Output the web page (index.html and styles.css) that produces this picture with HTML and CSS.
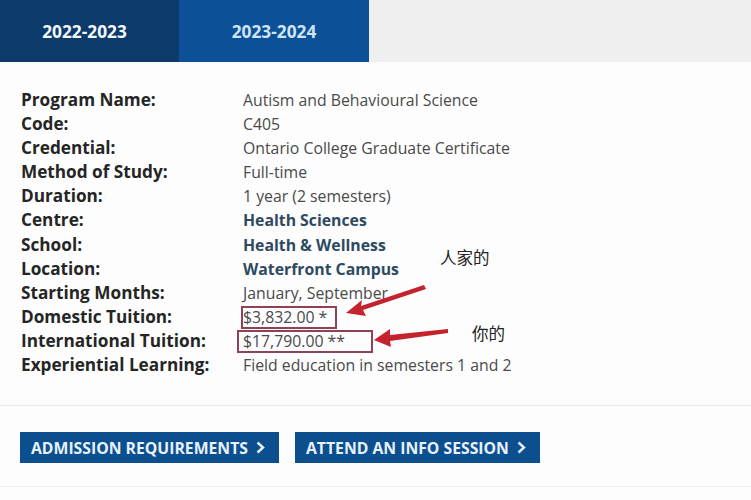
FILE: index.html
```html
<!DOCTYPE html>
<html>
<head>
<meta charset="utf-8">
<link rel="stylesheet" href="styles.css">
</head>
<body>
<div class="tabbar">
  <div class="tab tab-old">2022-2023</div>
  <div class="tab tab-active">2023-2024</div>
  <div class="tab-rest"></div>
</div>
<div class="info">
  <div class="grid">
    <div class="lbl">Program Name:</div><div class="val">Autism and Behavioural Science</div>
    <div class="lbl">Code:</div><div class="val">C405</div>
    <div class="lbl">Credential:</div><div class="val">Ontario College Graduate Certificate</div>
    <div class="lbl">Method of Study:</div><div class="val">Full-time</div>
    <div class="lbl">Duration:</div><div class="val">1 year (2 semesters)</div>
    <div class="lbl">Centre:</div><div class="val strong">Health Sciences</div>
    <div class="lbl">School:</div><div class="val strong">Health &amp; Wellness</div>
    <div class="lbl">Location:</div><div class="val strong">Waterfront Campus</div>
    <div class="lbl">Starting Months:</div><div class="val">January, September</div>
    <div class="lbl">Domestic Tuition:</div><div class="val"><span class="box box1">$3,832.00 *</span></div>
    <div class="lbl">International Tuition:</div><div class="val"><span class="box box2">$17,790.00 **</span></div>
    <div class="lbl">Experiential Learning:</div><div class="val">Field education in semesters 1 and 2</div>
  </div>
  <div class="note note1">人家的</div>
  <div class="note note2">你的</div>
  <svg class="arrows" width="751" height="500" viewBox="0 0 751 500">
    <path d="M424 285 L361 306 L362 300 L346 313 L366 316 L363 310 L426 289 Z" fill="#c4232e"/>
    <path d="M448 329 L390 335 L390 329 L374 340 L391 347 L390 341 L448 333 Z" fill="#c4232e"/>
  </svg>
</div>
<div class="actions">
  <a class="btn">ADMISSION REQUIREMENTS <svg class="chev" width="9" height="13" viewBox="0 0 9 13"><path d="M1.5 1.5 L7 6.5 L1.5 11.5" fill="none" stroke="currentColor" stroke-width="2.4"/></svg></a>
  <a class="btn">ATTEND AN INFO SESSION <svg class="chev" width="9" height="13" viewBox="0 0 9 13"><path d="M1.5 1.5 L7 6.5 L1.5 11.5" fill="none" stroke="currentColor" stroke-width="2.4"/></svg></a>
</div>
<div class="bottom"></div>
</body>
</html>
```

FILE: styles.css
```css
html, body {
  margin: 0;
  padding: 0;
  background: #fdfdfd;
  width: 751px;
  height: 500px;
  overflow: hidden;
  font-family: "Open Sans", "Noto Sans", sans-serif;
}
.tabbar {
  display: flex;
  height: 62px;
  background: #efefef;
}
.tab {
  display: flex;
  align-items: center;
  justify-content: center;
  font-weight: 700;
  font-size: 17.3px;
  position: relative;
}
.tab-old {
  width: 169px;
  padding-right: 10px;
  background: #0b3a6b;
  color: #f4f7fb;
}
.tab-active {
  width: 190px;
  background: #0c5197;
  color: #cfe4f6;
}
.tab-active::after {
  content: "";
  position: absolute;
  left: 87px;
  bottom: -8px;
  border-left: 8px solid transparent;
  border-right: 8px solid transparent;
  border-top: 8px solid #0c4a88;
}
.tab-rest {
  flex: 1;
  background: #efefef;
}
.info {
  position: relative;
  height: 343px;
  border-bottom: 1px solid #ececec;
  background: #fdfdfd;
}
.grid {
  display: grid;
  grid-template-columns: 222px 1fr;
  padding: 26px 0 0 21px;
  line-height: 24.1px;
}
.lbl {
  font-weight: 700;
  font-size: 17.2px;
  color: #252525;
}
.val {
  font-size: 15.8px;
  color: #4a4a4a;
}
.val.strong {
  font-weight: 700;
  color: #2d4a62;
}
.box {
  display: inline-block;
  border: 2px solid #8e4254;
  line-height: 19px;
}
.box1 {
  margin-left: -2px;
  padding-right: 8px;
}
.box2 {
  margin-left: -6px;
  padding-left: 4px;
  padding-right: 26px;
}
.note {
  position: absolute;
  font-family: "Noto Sans CJK SC", sans-serif;
  font-size: 16.5px;
  color: #222;
}
.note1 { left: 440px; top: 183px; }
.note2 { left: 472px; top: 259px; }
.arrows {
  position: absolute;
  left: 0;
  top: -62px;
  pointer-events: none;
}
.actions {
  display: flex;
  gap: 16px;
  padding: 26px 0 0 20px;
  height: 54px;
  border-bottom: 1px solid #efefef;
}
.btn {
  display: flex;
  align-items: center;
  gap: 8px;
  height: 31px;
  padding: 0 14px 0 11px;
  background: #0c4f8f;
  color: #e8f1fa;
  font-weight: 700;
  font-size: 15.75px;
}
.chev {
  display: block;
}
```
